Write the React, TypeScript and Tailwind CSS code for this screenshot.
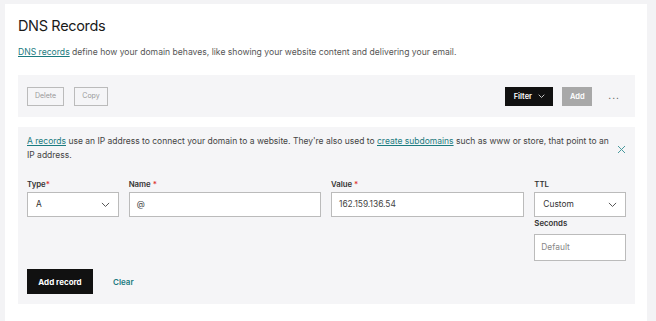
import React from "react";

const Chevron = ({ color = "#444", size = 10 }: { color?: string; size?: number }) => (
  <svg width={size} height={size * 0.6} viewBox="0 0 10 6" fill="none">
    <path d="M1 1l4 4 4-4" stroke={color} strokeWidth="1.1" />
  </svg>
);

export default function App() {
  return (
    <div
      className="w-[656px] h-[321px] bg-[#f3f3f5] pl-[5px] pt-[4px] pr-[9px] overflow-hidden"
      style={{ fontFamily: "Inter, 'Noto Sans', sans-serif" }}
    >
      <div className="bg-white h-[330px] pl-[13px] pr-[12px] pt-[12px] text-[#333]">
        <h1 className="text-[14.5px] leading-[20px] text-[#1a1a1a] tracking-[-0.35px]">DNS Records</h1>
        <p className="mt-[10px] text-[8.6px] leading-[12px] text-[#555]">
          <span className="text-[#1b7b80] underline">DNS records</span> define how your domain behaves, like showing
          your website content and delivering your email.
        </p>
        <div className="mt-[17px] h-[42px] bg-[#f5f5f7] flex items-center pl-[9px] pr-[15px] pt-[1px]">
          <button className="h-[19px] w-[37px] border border-[#bbb] text-[7px] text-[#999] bg-transparent">Delete</button>
          <button className="ml-[10px] h-[19px] w-[34px] border border-[#bbb] text-[7px] text-[#999] bg-transparent">Copy</button>
          <div className="flex-1" />
          <button className="h-[19px] w-[48px] bg-[#111] text-white text-[7.5px] font-semibold flex items-center justify-center gap-[6px]">
            Filter <Chevron color="#fff" size={7} />
          </button>
          <button className="ml-[9px] h-[19px] w-[30px] bg-[#a8a8a8] text-white text-[7.5px] font-semibold">Add</button>
          <span className="ml-[16px] text-[10px] text-[#555] tracking-[1px] leading-none -mt-[4px]">...</span>
        </div>
        <div className="mt-[10px] h-[177px] bg-[#f5f5f7] pl-[9px] pr-[9px] pt-[7px]">
          <div className="flex items-start">
            <p className="flex-1 text-[8.5px] leading-[14px] text-[#444]">
              <span className="text-[#1b7b80] underline">A records</span> use an IP address to connect your domain to a
              website. They're also used to <span className="text-[#1b7b80] underline">create subdomains</span> such as
              www or store, that point to an IP address.
            </p>
            <svg className="ml-[4px] mt-[11px]" width="9" height="9" viewBox="0 0 9 9" fill="none">
              <path d="M1 1l7 7M8 1L1 8" stroke="#4a9a9e" strokeWidth="1" />
            </svg>
          </div>
          <div className="mt-[17px] flex gap-[10px] text-[7.8px]">
            <div className="w-[92px]">
              <div className="font-semibold text-[#333] h-[12px]">Type<span className="text-[#d33]">*</span></div>
              <div className="mt-[1px] h-[25px] bg-white border border-[#bbb] flex items-center justify-between px-[8px]">
                <span className="text-[8.4px] text-[#333]">A</span>
                <Chevron color="#555" size={9} />
              </div>
            </div>
            <div className="w-[193px]">
              <div className="font-semibold text-[#333] h-[12px]">Name <span className="text-[#d33]">*</span></div>
              <div className="mt-[1px] h-[25px] bg-white border border-[#bbb] flex items-center px-[7px]">
                <span className="text-[8.4px] text-[#444]">@</span>
              </div>
            </div>
            <div className="w-[194px]">
              <div className="font-semibold text-[#333] h-[12px]">Value <span className="text-[#d33]">*</span></div>
              <div className="mt-[1px] h-[25px] bg-white border border-[#bbb] flex items-center px-[7px]">
                <span className="text-[8.4px] text-[#444]">162.159.136.54</span>
              </div>
            </div>
            <div className="w-[92px]">
              <div className="font-semibold text-[#333] h-[12px]">TTL</div>
              <div className="mt-[1px] h-[25px] bg-white border border-[#bbb] flex items-center justify-between px-[8px]">
                <span className="text-[8.4px] text-[#333]">Custom</span>
                <Chevron color="#555" size={9} />
              </div>
              <div className="mt-[1px] font-semibold text-[#333] h-[12px]">Seconds</div>
              <div className="mt-[4px] h-[27px] bg-white border border-[#bbb] flex items-center px-[6px]">
                <span className="text-[8.4px] text-[#888]">Default</span>
              </div>
            </div>
          </div>
          <div className="mt-[8px] flex items-center">
            <button className="h-[25px] w-[66px] bg-[#111] text-white text-[8px] font-bold">Add record</button>
            <span className="ml-[20px] text-[8px] font-semibold text-[#1b7b80]">Clear</span>
          </div>
        </div>
      </div>
    </div>
  );
}
